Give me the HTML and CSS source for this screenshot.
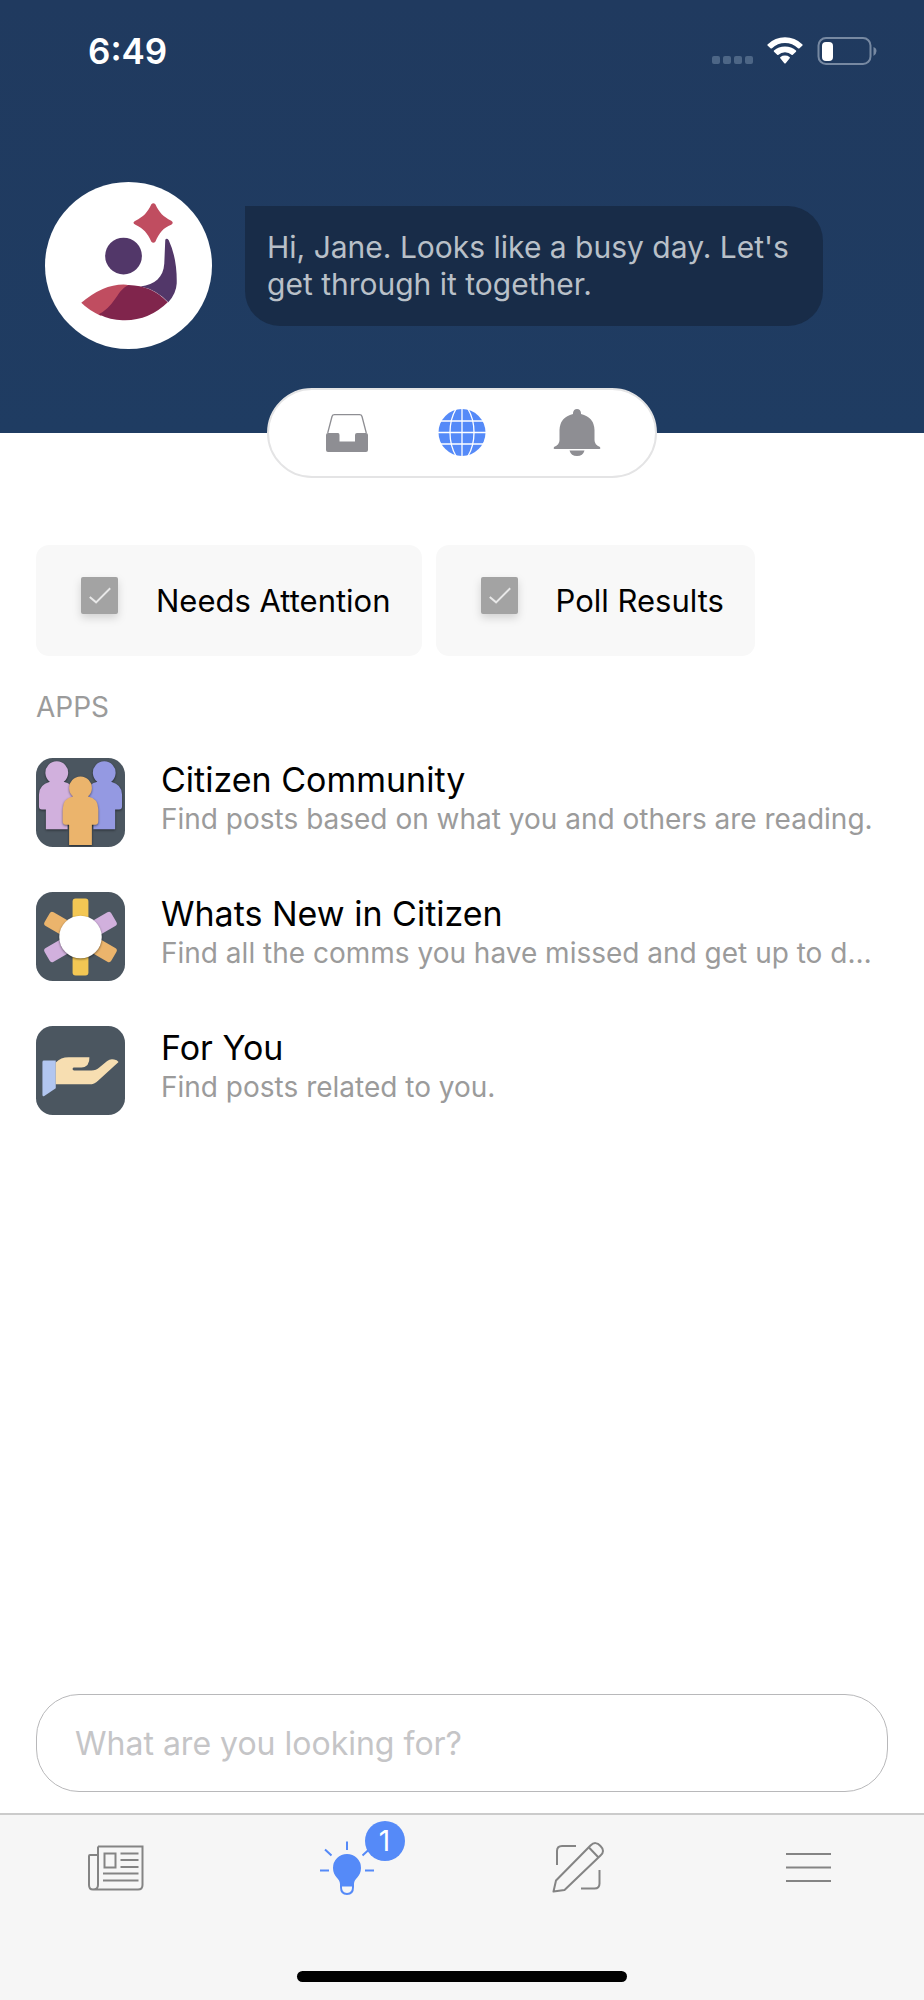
FILE: index.html
```html
<!DOCTYPE html>
<html lang="en">
<head>
<meta charset="utf-8">
<meta name="viewport" content="width=device-width, initial-scale=1">
<title>Assistant</title>
<link rel="stylesheet" href="styles.css">
</head>
<body>
<div class="screen">
  <header class="hero">
    <div class="status">
      <time class="clock">6:49</time>
      <svg class="status-icons" viewBox="0 0 168 28" width="168" height="28" aria-hidden="true">
        <g fill="#4d6686"><rect x="1" y="19" width="8" height="8" rx="2"/><rect x="12" y="19" width="8" height="8" rx="2"/><rect x="23" y="19" width="8" height="8" rx="2"/><rect x="34" y="19" width="8" height="8" rx="2"/></g>
        <g fill="#fff"><path d="M56.500 8.500Q56 7.800 56.800 7.200Q64 .2 74 .2Q84 .2 91.200 7.200Q92 7.800 91.500 8.500L88.500 11.300Q87.800 11.800 87 11.200Q81.500 6 74 6Q66.500 6 61 11.200Q60.200 11.800 59.500 11.300Z"/><path d="M63 14.800Q62.400 14.200 63 13.600Q67.500 9.400 74 9.400Q80.500 9.400 85 13.600Q85.600 14.200 85 14.800L81.800 17.800Q81.200 18.400 80.500 17.800Q78 15.300 74 15.300Q70 15.300 67.500 17.800Q66.800 18.400 66.200 17.800Z"/><path d="M69.300 21.200Q68.700 20.500 69.500 20Q71.300 18.600 74 18.600Q76.700 18.600 78.500 20Q79.300 20.500 78.700 21.200L74.700 26.200Q74 27 73.300 26.200Z"/></g>
        <rect x="107.500" y="1" width="52" height="26" rx="7.500" fill="none" stroke="#7789a2" stroke-width="2"/>
        <rect x="111" y="5" width="11" height="19" rx="4" fill="#fff"/>
        <path d="M162.500 10Q165.500 11 165.500 14T162.500 19Z" fill="#7789a2"/>
      </svg>
    </div>
    <div class="greeting">
      <svg class="avatar" viewBox="0 0 168 168" role="img" aria-label="Assistant">
        <circle cx="84" cy="84" r="84" fill="#fff"/>
        <path d="M107 22.500Q109 20.500 111 22.500C115 31 119 35 127 39Q130 41 127 43C119 46 115 51 111 60Q109 62 107 60C103 51 99 47 91 43Q87 41 91 39C99 35 103 31 107 22.500Z" fill="#c04d60"/>
        <circle cx="79" cy="74.500" r="18.500" fill="#523769"/>
        <path d="M121 58Q122.500 56 124.500 58.500Q133 77 132.500 102Q132 112 124 121Q112 108 96 105C111 103 119 96 120 82Z" fill="#523769"/>
        <path d="M36.500 121.500Q58 103 79 103Q82 103 85 104Q75 125 56 134.500Q44 129 36.500 121.500Z" fill="#c04d60"/>
        <path d="M84 103.500Q108 104 123.500 121Q104 140 78 139Q66 139 54 133Q63 129 71 117C76 109 79 106 84 103.500Z" fill="#80254c"/>
      </svg>
      <p class="bubble">Hi, Jane. Looks like a busy day. Let's get through it together.</p>
    </div>
  </header>

  <nav class="switcher" aria-label="Sections">
    <button class="switch" type="button" aria-label="Inbox">
      <svg viewBox="0 2 48 48" width="48" height="48"><path d="M4.700 26L9 9.500Q9.500 7.700 11.500 7.700H36.500Q38.500 7.700 39 9.500L43.300 26" fill="none" stroke="#8e8e93" stroke-width="1.300"/><path d="M3 28Q3 26 5 26H15Q16.500 26 16.500 28V34.500H32V28Q32 26 34 26H43Q45 26 45 28V43Q45 45 43 45H5Q3 45 3 43Z" fill="#8e8e93"/></svg>
    </button>
    <button class="switch" type="button" aria-label="Explore" aria-pressed="true">
      <svg viewBox="0 2 48 48" width="48" height="48"><circle cx="24" cy="25.500" r="23.500" fill="#558af8"/><g fill="none" stroke="#fff" stroke-width="1.300"><path d="M24 1V50M0 25.500H48M3 14H45M3 37H45"/><path d="M18 2Q12 12 12 25.500T18 49M30 2Q36 12 36 25.500T30 49"/></g></svg>
    </button>
    <button class="switch" type="button" aria-label="Notifications">
      <svg viewBox="0 2 48 48" width="48" height="48"><path d="M20 6Q20.500 2 24 2T28 6V7Q41 10 41.500 23V33Q41.500 38 47 40Q48 42 46.500 42H1.500Q0 42 1 40Q6.500 38 6.500 33V23Q7 10 20 7ZM16.500 43.500H31.500Q30 49 24 49T16.500 43.500Z" fill="#8e8e93"/></svg>
    </button>
  </nav>

  <main class="content">
    <div class="chips">
      <button class="chip" type="button">
        <svg class="chip-icon" viewBox="0 0 38 38"><rect width="38" height="38" rx="2" fill="#a3a3a3"/><path d="M9 20.500L15.500 26L30 11.500" fill="none" stroke="#e8e8e8" stroke-width="2"/></svg>
        <span>Needs Attention</span>
      </button>
      <button class="chip" type="button">
        <svg class="chip-icon" viewBox="0 0 38 38"><rect width="38" height="38" rx="2" fill="#a3a3a3"/><path d="M9 20.500L15.500 26L30 11.500" fill="none" stroke="#e8e8e8" stroke-width="2"/></svg>
        <span>Poll Results</span>
      </button>
    </div>

    <h2 class="section-title">APPS</h2>
    <ul class="apps">
      <li>
        <a class="app" href="#community">
          <svg class="app-icon people" viewBox="0 0 90 90">
            <rect width="90" height="90" rx="17" fill="#4b5660"/>
            <g class="lift" fill="#d1b0dd"><path d="M14 24A11.500 11.500 0 1 1 28 24Q38 26 38 36V52H32V72H10V52H6Q3 52 3 49V37Q3 27 14 24Z"/></g>
            <g class="lift" fill="#9499e2"><path d="M62 24A11.500 11.500 0 1 1 76 24Q87 27 87 37V49Q87 52 84 52H80V72H58V52H52V36Q52 26 62 24Z"/></g>
            <g class="lift" fill="#ebb46c"><path d="M37.500 39A11.500 11.500 0 1 1 52.500 39Q63 41 63 52V64Q63 67.500 60 67.500H56.500V88H33.500V67.500H30Q27 67.500 27 64V52Q27 41 37.500 39Z"/></g>
          </svg>
          <span class="app-text"><span class="app-name">Citizen Community</span><span class="app-info">Find posts based on what you and others are reading.</span></span>
        </a>
      </li>
      <li>
        <a class="app" href="#new">
          <svg class="app-icon" viewBox="0 0 90 90">
            <rect width="90" height="90" rx="17" fill="#4b5660"/>
            <rect x="37" y="6.500" width="16" height="78" rx="3" fill="#f3c754"/>
            <g fill="#ebb46c"><rect x="37" y="6.500" width="16" height="78" rx="3" transform="rotate(-60 45 45.500)"/></g>
            <g fill="#d1b0dd"><rect x="37" y="6.500" width="16" height="78" rx="3" transform="rotate(60 45 45.500)"/></g>
            <circle class="lift" cx="45" cy="45.500" r="21.500" fill="#fff"/>
          </svg>
          <span class="app-text"><span class="app-name">Whats New in Citizen</span><span class="app-info">Find all the comms you have missed and get up to date.</span></span>
        </a>
      </li>
      <li>
        <a class="app" href="#foryou">
          <svg class="app-icon" viewBox="0 0 90 90">
            <rect width="90" height="90" rx="17" fill="#4b5660"/>
            <path d="M8 35H20V63L8 71Q6.500 71.500 6.500 69.500V36.500Q6.500 35 8 35Z" fill="#b2c6f0"/>
            <path d="M20 37Q25 31.500 33 31.500H54Q54.500 41 46 42H38.500Q37 42 37 43.500T38.500 45H56Q61 45 64 42L72 35.500Q75 33 79 34Q82 34.500 83.500 36.500L63 55Q59 59 54 59H20Z" fill="#f7deb1"/>
          </svg>
          <span class="app-text"><span class="app-name">For You</span><span class="app-info">Find posts related to you.</span></span>
        </a>
      </li>
    </ul>
  </main>

  <form class="search">
    <input class="search-box" type="search" aria-label="Search" placeholder="What are you looking for?">
  </form>

  <footer class="tabbar">
    <nav class="tabs" aria-label="Main">
      <a class="tab" href="#news" aria-label="News">
        <svg viewBox="0 0 60 60" width="60" height="60" fill="none" stroke="#848484" stroke-width="2"><path d="M12 9.500H56.500V48Q56.500 52.500 52 52.500H7Q3 52.500 3 48V19Q3 18 4 18H12M12 9.500V48Q12 52.500 7 52.500"/><rect x="18.500" y="16.500" width="11" height="14"/><path d="M34.500 16.500H52.500M34.500 23H52.500M34.500 30H52.500M17 36.500H52.500M17 43.500H52.500"/></svg>
      </a>
      <a class="tab" href="#assistant" aria-label="Assistant, 1 new" aria-current="page">
        <svg viewBox="0 0 60 60" width="60" height="60"><path d="M30 4.500V13M8 12.500L14.500 18.500M52 12.500L45.500 18.500M3 33.500H12M48 33.500H57" fill="none" stroke="#558af8" stroke-width="2"/><path d="M16 31A14 14 0 0 1 44 31C44 40 37 41 37 47V50Q37 58 30 58T23 50V47C23 41 16 40 16 31Z" fill="#558af8"/><path d="M25 49.500H35Q35.500 56 30 56T25 49.500Z" fill="#f6f6f6"/></svg>
        <span class="badge">1</span>
      </a>
      <a class="tab" href="#compose" aria-label="Compose">
        <svg viewBox="0 0 60 60" width="60" height="60" fill="none" stroke="#848484" stroke-width="2"><path d="M9 28V14Q9 9 14 9H28M51.500 33V46.500Q51.500 51.500 46.500 51.500H33"/><path d="M5.500 54.500L8 43.500L42.500 8.500Q47.500 3.500 52.500 9Q57.500 14 52.500 18.500L16.500 53ZM41 10.500L50.500 20.500" stroke-linejoin="round"/></svg>
      </a>
      <a class="tab" href="#menu" aria-label="Menu">
        <svg viewBox="0 0 60 60" width="60" height="60" fill="none" stroke="#848484" stroke-width="2"><path d="M7 17H52M7 30.500H52M7 44H52"/></svg>
      </a>
    </nav>
    <div class="home-bar"></div>
  </footer>
</div>
</body>
</html>
```
FILE: styles.css
```css
* {
  box-sizing: border-box;
}

body {
  margin: 0;
  background: #fff;
  color: #000;
  font-family: Inter, "Liberation Sans", sans-serif;
}

button {
  border: 0;
  padding: 0;
  background: none;
  color: inherit;
  font: inherit;
}

a {
  color: inherit;
  text-decoration: none;
}

svg {
  display: block;
  flex: none;
}

.screen {
  display: flex;
  flex-direction: column;
  min-height: 100vh;
}

.hero {
  padding-bottom: 84px;
  background: linear-gradient(#203a5f, #1f3c62);
}

.status {
  display: flex;
  align-items: center;
  justify-content: space-between;
  height: 102px;
  padding: 0 45px 0 88px;
  color: #fff;
}

.clock {
  font-size: 35px;
  font-weight: 600;
}

.greeting {
  display: flex;
  align-items: center;
  gap: 33px;
  padding: 80px 101px 0 45px;
}

.avatar {
  width: 167px;
  height: 167px;
}

.bubble {
  flex: 1;
  margin: 0;
  padding: 23px 22px;
  border-radius: 0 35px 35px 35px;
  background: #182c48;
  color: #b9c0c8;
  font-size: 30px;
  line-height: 37px;
}

.switcher {
  display: flex;
  align-items: center;
  justify-content: space-around;
  align-self: center;
  width: 390px;
  height: 90px;
  margin-top: -45px;
  padding: 0 20px;
  border: 2px solid #e4e4e5;
  border-radius: 45px;
  background: #fff;
}

.content {
  flex: 1;
  padding: 67px 36px 0;
}

.chips {
  display: flex;
  gap: 14px;
}

.chip {
  display: flex;
  align-items: center;
  gap: 38px;
  height: 111px;
  padding: 0 31px 0 45px;
  border-radius: 13px;
  background: #f8f8f8;
  font-size: 31px;
}

.chip-icon {
  width: 37px;
  height: 37px;
  margin-bottom: 10px;
  filter: drop-shadow(0 4px 4px rgba(0, 0, 0, 0.15));
}

.section-title {
  margin: 33px 0;
  color: #9b9b9b;
  font-size: 28px;
  font-weight: 400;
  line-height: 36px;
}

.apps {
  display: flex;
  flex-direction: column;
  gap: 45px;
  margin: 0;
  padding: 0;
  list-style: none;
}

.app {
  display: flex;
  gap: 36px;
  padding-right: 6px;
}

.app-icon {
  width: 89px;
  height: 89px;
}

.lift {
  filter: drop-shadow(0 1px 1px rgba(0, 0, 0, 0.5));
}

.app-text {
  display: flex;
  flex: 1;
  flex-direction: column;
  min-width: 0;
  padding-top: 1px;
}

.app-name {
  font-size: 34px;
  line-height: 42px;
}

.app-info {
  overflow: hidden;
  color: #9b9b9b;
  font-size: 28px;
  line-height: 36px;
  text-overflow: ellipsis;
  white-space: nowrap;
}

.search {
  padding: 0 36px 21px;
}

.search-box {
  display: block;
  width: 100%;
  height: 98px;
  padding: 0 38px;
  border: 1px solid #b8b8ba;
  border-radius: 43px;
  background: #fff;
  color: #000;
  font: 32px Inter, "Liberation Sans", sans-serif;
  appearance: none;
}

.search-box::placeholder {
  color: #c5c5c7;
  opacity: 1;
}

.tabbar {
  padding: 22px 0 18px;
  border-top: 2px solid #cbcbcb;
  background: #f6f6f6;
}

.tabs {
  display: grid;
  grid-template-columns: repeat(4, 1fr);
}

.tab {
  position: relative;
  justify-self: center;
}

.badge {
  position: absolute;
  top: -16px;
  left: 48px;
  width: 40px;
  height: 40px;
  border-radius: 50%;
  background: #558af8;
  color: #fff;
  font-size: 28px;
  line-height: 40px;
  text-align: center;
}

.home-bar {
  width: 330px;
  height: 11px;
  margin: 74px auto 0;
  border-radius: 6px;
  background: #000;
}
```
